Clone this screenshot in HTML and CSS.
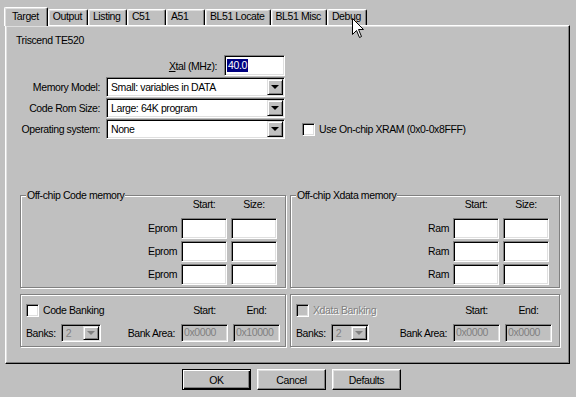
FILE: index.html
```html
<!DOCTYPE html>
<html lang="en">
<head>
    <meta charset="UTF-8">
    <title>Options for Target</title>
    <link rel="stylesheet" href="styles.css">
</head>
<body>
    <div class="dialog">
        <div class="tabs">
            <div class="tab active">Target</div>
            <div class="tab">Output</div>
            <div class="tab">Listing</div>
            <div class="tab">C51</div>
            <div class="tab">A51</div>
            <div class="tab">BL51 Locate</div>
            <div class="tab">BL51 Misc</div>
            <div class="tab">Debug</div>
        </div>

        <div class="panel">
            <div class="device">Triscend TE520</div>

            <div class="target-grid">
                <div class="xtal">
                    <span><u>X</u>tal (MHz):</span>
                    <div class="field xtal-field"><span class="sel">40.0</span></div>
                </div>

                <span class="lbl">Memory Model:</span>
                <div class="combo wide"><span class="combo-text">Small: variables in DATA</span><span class="drop"></span></div>

                <span class="lbl">Code Rom Size:</span>
                <div class="combo wide"><span class="combo-text">Large: 64K program</span><span class="drop"></span></div>

                <span class="lbl">Operating system:</span>
                <div class="combo wide"><span class="combo-text">None</span><span class="drop"></span></div>
                <div class="xram"><span class="check"></span>Use On-chip XRAM (0x0-0x8FFF)</div>
            </div>

            <div class="group-row memory-row">
                <div class="group left">
                    <span class="group-title">Off-chip Code memory</span>
                    <div class="mem-grid">
                        <span class="col-head start">Start:</span>
                        <span class="col-head size">Size:</span>
                        <span class="row-lbl">Eprom</span><div class="field"></div><div class="field"></div>
                        <span class="row-lbl">Eprom</span><div class="field"></div><div class="field"></div>
                        <span class="row-lbl">Eprom</span><div class="field"></div><div class="field"></div>
                    </div>
                </div>
                <div class="group right">
                    <span class="group-title">Off-chip Xdata memory</span>
                    <div class="mem-grid">
                        <span class="col-head start">Start:</span>
                        <span class="col-head size">Size:</span>
                        <span class="row-lbl">Ram</span><div class="field"></div><div class="field"></div>
                        <span class="row-lbl">Ram</span><div class="field"></div><div class="field"></div>
                        <span class="row-lbl">Ram</span><div class="field"></div><div class="field"></div>
                    </div>
                </div>
            </div>

            <div class="group-row bank-row">
                <div class="group left">
                    <div class="bank-grid">
                        <div class="bank-check"><span class="check"></span>Code Banking</div>
                        <span class="col-head">Start:</span>
                        <span class="col-head">End:</span>
                        <div class="banks">
                            <span>Banks:</span>
                            <div class="combo small off"><span class="combo-text">2</span><span class="drop"></span></div>
                            <span class="bank-area">Bank Area:</span>
                        </div>
                        <div class="field off">0x0000</div>
                        <div class="field off">0x10000</div>
                    </div>
                </div>
                <div class="group right">
                    <div class="bank-grid">
                        <div class="bank-check"><span class="check off"></span><span class="dim">Xdata Banking</span></div>
                        <span class="col-head">Start:</span>
                        <span class="col-head">End:</span>
                        <div class="banks">
                            <span>Banks:</span>
                            <div class="combo small off"><span class="combo-text">2</span><span class="drop"></span></div>
                            <span class="bank-area">Bank Area:</span>
                        </div>
                        <div class="field off">0x0000</div>
                        <div class="field off">0x0000</div>
                    </div>
                </div>
            </div>
        </div>

        <div class="buttons">
            <button class="btn default">OK</button>
            <button class="btn">Cancel</button>
            <button class="btn">Defaults</button>
        </div>

        <svg class="cursor" width="13" height="21" viewBox="0 0 13 21">
            <path d="M0.5 0.5V16.5L4.5 12.5L7.5 19.5L9.5 18.5L6.5 11.5H11.5Z" fill="#fff" stroke="#000" stroke-width="1"/>
        </svg>
    </div>
</body>
</html>
```

FILE: styles.css
```css
body {
    margin: 0;
    background: #c0c0c0;
    font-family: "Liberation Sans", Arial, sans-serif;
    font-size: 10.5px;
    letter-spacing: -0.4px;
    color: #000;
}
.dialog {
    position: relative;
    height: 397px;
    box-sizing: border-box;
    padding: 7px 0 0 5px;
}

/* tab strip */
.tabs {
    display: flex;
    align-items: flex-end;
    height: 18px;
}
.tab {
    height: 16px;
    min-width: 39px;
    box-sizing: border-box;
    padding: 0 5px 0 4px;
    line-height: 13px;
    border: 1px solid;
    border-bottom: 0;
    border-color: #fff #000 #000 #fff;
    border-radius: 2px 2px 0 0;
    box-shadow: inset -1px 0 #808080, inset 1px 1px #dfdfdf;
}
.tab.active {
    position: relative;
    z-index: 1;
    height: 19px;
    margin: 0 0 -1px -1px;
    padding: 2px 8px 0 7px;
    background: #c0c0c0;
}

.panel {
    width: 565px;
    height: 339px;
    box-sizing: border-box;
    padding: 8px 0 0 10px;
    border: 1px solid;
    border-color: #fff #000 #000 #fff;
    box-shadow: inset -1px -1px #808080, inset 1px 1px #dfdfdf;
}
.device {
    line-height: 13px;
}

/* sunken controls */
.field, .combo, .check {
    box-sizing: border-box;
    background: #fff;
    border: 1px solid;
    border-color: #808080 #fff #fff #808080;
    box-shadow: inset 1px 1px #000, inset -1px -1px #dfdfdf;
}
.field {
    height: 21px;
}
.field.off {
    height: 18px;
    padding-left: 2px;
    line-height: 15px;
    background: #c0c0c0;
    color: #808080;
}
.check {
    width: 13px;
    height: 13px;
    flex: none;
}
.check.off {
    background: #c0c0c0;
}
.combo {
    height: 20px;
    display: flex;
    padding: 1px;
}
.combo-text {
    flex: 1;
    padding-left: 3px;
    line-height: 16px;
}
.drop {
    width: 16px;
    box-sizing: border-box;
    display: flex;
    align-items: center;
    justify-content: center;
    background: #c0c0c0;
    border: 1px solid;
    border-color: #dfdfdf #000 #000 #dfdfdf;
    box-shadow: inset 1px 1px #fff, inset -1px -1px #808080;
}
.drop::after {
    content: "";
    border-top: 4px solid #000;
    border-left: 4px solid transparent;
    border-right: 4px solid transparent;
}
.combo.off {
    background: #c0c0c0;
    color: #808080;
    height: 18px;
}
.combo.off .combo-text {
    line-height: 14px;
}
.combo.off .drop::after {
    border-top-color: #808080;
}

/* target settings */
.target-grid {
    margin-top: 8px;
    display: grid;
    grid-template-columns: 86px 179px auto;
    column-gap: 4px;
    row-gap: 1px;
    align-items: center;
}
.xtal {
    grid-column: 1 / 3;
    display: flex;
    justify-content: flex-end;
    align-items: center;
    gap: 7px;
}
.xtal-field {
    width: 61px;
    padding: 3px 0 0 2px;
}
.sel {
    display: inline-block;
    padding: 0 1px;
    line-height: 13px;
    background: #000080;
    color: #fff;
}
.lbl {
    grid-column: 1;
    text-align: right;
    padding-right: 2px;
}
.combo.wide {
    grid-column: 2;
}
.xram {
    grid-column: 3;
    display: flex;
    align-items: center;
    gap: 4px;
    margin-left: 13px;
}

/* group boxes */
.group-row {
    display: flex;
    gap: 4px;
    margin-left: 4px;
}
.memory-row {
    margin-top: 56px;
}
.bank-row {
    margin-top: 6px;
}
.group {
    position: relative;
    box-sizing: border-box;
    border: 1px solid #808080;
    box-shadow: inset 1px 1px #fff, 1px 1px #fff;
}
.group.left {
    width: 266px;
}
.group.right {
    width: 270px;
}
.group-title {
    position: absolute;
    top: -7px;
    left: 5px;
    padding: 0 1px;
    line-height: 13px;
    background: #c0c0c0;
}
.mem-grid {
    display: grid;
    grid-template-columns: 1fr 46px 46px;
    column-gap: 4px;
    row-gap: 2px;
    align-items: center;
    padding: 2px 8px 2px 0;
    line-height: 13px;
}
.right .mem-grid {
    padding-right: 10px;
}
.col-head {
    text-align: center;
}
.mem-grid .col-head {
    margin-bottom: 5px;
}
.col-head.start {
    grid-column: 2;
}
.col-head.size {
    grid-column: 3;
}
.row-lbl {
    grid-column: 1;
    text-align: right;
}

.bank-grid {
    display: grid;
    grid-template-columns: 1fr 47px 47px;
    column-gap: 5px;
    row-gap: 7px;
    align-items: center;
    padding: 9px 5px 4px;
    line-height: 13px;
}
.right .bank-grid {
    padding-right: 7px;
}
.bank-check {
    display: flex;
    align-items: center;
    gap: 4px;
}
.dim {
    color: #808080;
    text-shadow: 1px 1px #fff;
}
.banks {
    display: flex;
    align-items: center;
}
.combo.small {
    width: 40px;
    margin-left: 5px;
}
.right .combo.small {
    width: 38px;
}
.bank-area {
    margin-left: auto;
    margin-right: 1px;
}

/* buttons */
.buttons {
    display: flex;
    justify-content: center;
    gap: 6px;
    margin-top: 5px;
    padding-left: 2px;
}
.btn {
    width: 69px;
    height: 21px;
    box-sizing: border-box;
    padding: 0;
    font: inherit;
    letter-spacing: inherit;
    color: #000;
    background: #c0c0c0;
    border: 1px solid;
    border-color: #fff #000 #000 #fff;
    box-shadow: inset -1px -1px #808080, inset 1px 1px #dfdfdf;
}
.btn.default {
    border-color: #000;
    box-shadow: inset 1px 1px #fff, inset -1px -1px #000, inset -2px -2px #808080;
}

.cursor {
    position: absolute;
    left: 352px;
    top: 18px;
}
```
